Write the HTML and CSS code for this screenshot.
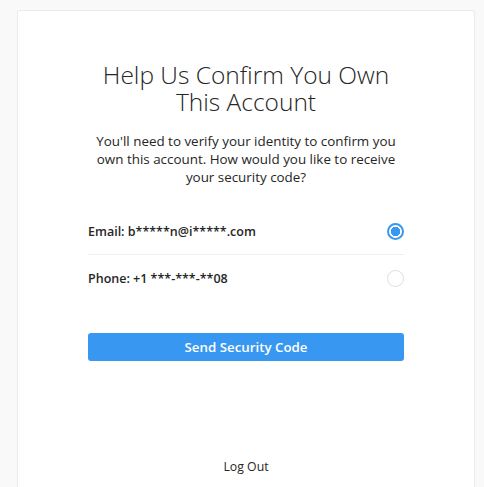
FILE: index.html
```html
<!DOCTYPE html>
<html>
<head>
<meta charset="utf-8">
<link rel="stylesheet" href="styles.css">
</head>
<body>
<div class="card">
  <div class="content">
    <h1 class="title">Help Us Confirm You Own This Account</h1>
    <p class="desc">You'll need to verify your identity to confirm you own this account. How would you like to receive your security code?</p>
    <div class="options">
      <label class="option">
        <span class="opt-text">Email: b*****n@i*****.com</span>
        <span class="radio checked"></span>
      </label>
      <label class="option">
        <span class="opt-text">Phone: +1 ***-***-**08</span>
        <span class="radio"></span>
      </label>
    </div>
    <button class="send">Send Security Code</button>
  </div>
  <div class="logout">Log Out</div>
</div>
</body>
</html>
```
FILE: styles.css
```css
html, body {
  margin: 0;
  padding: 0;
  background: #f9f9f9;
}
body {
  padding: 10px 9px 0 17px;
  font-family: "Open Sans", "Noto Sans", sans-serif;
  color: #262626;
}
.card {
  background: #fff;
  border: 1px solid #ebebeb;
  border-bottom: none;
  border-radius: 3px 3px 0 0;
  height: 477px;
  box-sizing: border-box;
  display: flex;
  flex-direction: column;
  align-items: center;
}
.content {
  width: 316px;
  margin-top: 50px;
  display: flex;
  flex-direction: column;
}
.title {
  margin: 0;
  font-weight: 300;
  font-size: 24.5px;
  line-height: 27px;
  text-align: center;
  color: #262626;
}
.desc {
  margin: 17px 0 0;
  font-size: 13.4px;
  line-height: 18px;
  text-align: center;
  color: #262626;
}
.options {
  margin-top: 22px;
}
.option {
  display: flex;
  align-items: center;
  justify-content: space-between;
  height: 46px;
  box-sizing: content-box;
}
.option + .option {
  border-top: 1px solid #efefef;
}
.opt-text {
  font-size: 12.5px;
  font-weight: 600;
}
.radio {
  width: 17px;
  height: 17px;
  box-sizing: border-box;
  border-radius: 50%;
  border: 1px solid #dedede;
}
.radio.checked {
  border: 2px solid #3897f0;
  background: radial-gradient(circle, #3897f0 0 4.5px, #fff 5px);
}
.send {
  margin-top: 32px;
  height: 28px;
  border: none;
  border-radius: 3px;
  background: #3897f0;
  color: #fff;
  font-family: inherit;
  font-size: 13.3px;
  font-weight: 600;
}
.logout {
  margin-top: auto;
  margin-bottom: 12px;
  font-size: 12.3px;
}
```
